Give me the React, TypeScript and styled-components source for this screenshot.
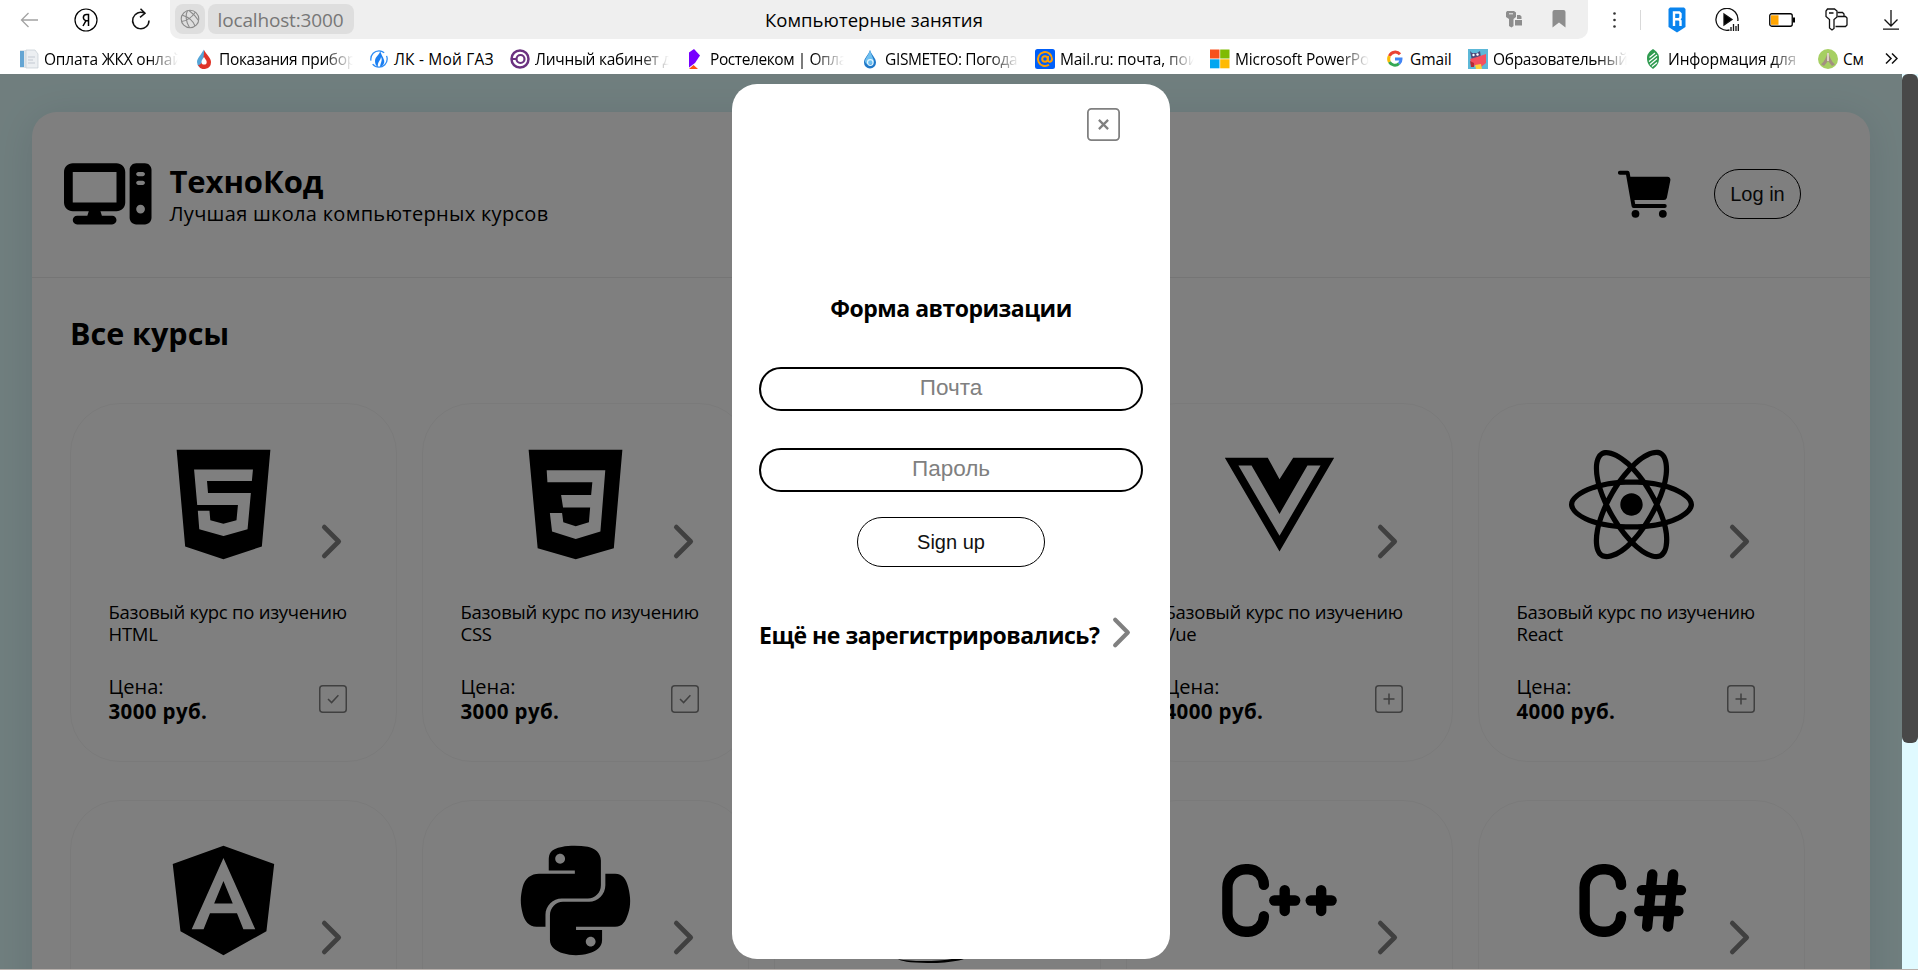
import React from "react";
import styled, { createGlobalStyle, css } from "styled-components";
import { FaHtml5, FaVuejs, FaReact, FaAngular, FaPython, FaJava, FaJs } from "react-icons/fa";
import { FaComputer } from "react-icons/fa6";
import { IoCart, IoChevronForward } from "react-icons/io5";
import { TbBrandCpp, TbBrandCSharp } from "react-icons/tb";

const GlobalStyle = createGlobalStyle`
  * { box-sizing: border-box; }
  html, body { margin: 0; padding: 0; overflow: hidden; background: #fff; }
  body { font-family: "Open Sans", "Noto Sans", sans-serif; color: #000; }
  svg { display: block; flex: none; }
`;

const Screen = styled.div`
  width: 1918px;
  height: 970px;
  display: flex;
  flex-direction: column;
  overflow: hidden;
`;

/* ---------- browser bars ---------- */

const Toolbar = styled.div`
  height: 39px;
  flex: none;
  display: flex;
  align-items: center;
  background: #fff;
`;

const NavGroup = styled.div`
  width: 170px;
  padding-left: 20px;
  display: flex;
  align-items: center;
  gap: 33.5px;
`;

const AddressBar = styled.div`
  width: 1418px;
  height: 39px;
  padding: 0 22px 1px 5px;
  display: flex;
  align-items: center;
  background: #efefef;
  border-radius: 0 0 10px 10px;
`;

const SiteBadge = styled.div`
  width: 30px;
  height: 30px;
  display: flex;
  align-items: center;
  justify-content: center;
  background: #dedede;
  border-radius: 8px;
`;

const Host = styled.div`
  width: 146px;
  height: 30px;
  margin-left: 3px;
  padding: 1px 0 0 9.5px;
  line-height: 30px;
  background: #dedede;
  border-radius: 8px;
  color: #777;
  font-size: 19px;
  letter-spacing: -0.15px;
  white-space: nowrap;
`;

const PageTitle = styled.div`
  margin-left: 411px;
  padding-top: 1px;
  width: 730px;
  font-size: 18.5px;
  line-height: 30px;
  letter-spacing: 0.04px;
  white-space: nowrap;
`;

const FieldIcons = styled.div`
  flex: 1;
  display: flex;
  justify-content: flex-end;
  align-items: center;
  gap: 29px;
`;

const ToolIcons = styled.div`
  flex: 1;
  padding-left: 24.5px;
  display: flex;
  align-items: center;
`;

const Tool = styled.span<{ $gap: number }>`
  margin-left: ${(p) => p.$gap}px;
`;

const Separator = styled.i`
  width: 1px;
  height: 20px;
  margin-left: 24px;
  background: #d9d9d9;
`;

const Bookmarks = styled.div`
  height: 35px;
  flex: none;
  padding-left: 19px;
  display: flex;
  align-items: center;
  gap: 16px;
  background: #fff;
`;

const Bookmark = styled.div`
  padding-top: 4px;
  display: flex;
  align-items: center;
  gap: 5px;
`;

const BookmarkText = styled.span<{ $w: number; $fade?: boolean; $ls: number }>`
  width: ${(p) => p.$w}px;
  padding-top: 1px;
  white-space: nowrap;
  font-size: 15.5px;
  line-height: 24px;
  letter-spacing: ${(p) => p.$ls}px;
  ${(p) =>
    p.$fade &&
    css`
      mask-image: linear-gradient(to right, #000 calc(100% - 30px), transparent);
    `}
`;

/* ---------- page ---------- */

const Viewport = styled.div`
  height: 895px;
  flex: none;
  display: flex;
  position: relative;
  overflow: hidden;
`;

const Page = styled.div`
  width: 1902px;
  height: 895px;
  padding: 38px 32px 0;
  background: #e0fdfd;
  overflow: hidden;
`;

const Wrapper = styled.div`
  width: 1838px;
  height: 1300px;
  background: #fff;
  border-radius: 25px;
  box-shadow: 0 5px 40px rgba(0, 20, 60, 0.1);
`;

const Header = styled.header`
  height: 166px;
  padding: 0 69px 0 32px;
  display: flex;
  align-items: center;
  border-bottom: 1px solid #eaeaea;
`;

const BrandLogo = styled.div`
  margin-bottom: 2px;
`;

const Brand = styled.div`
  margin-left: 18px;
  flex: 1;
`;

const BrandName = styled.h2`
  margin: -1px 0 3px;
  font-size: 31px;
  line-height: 36px;
  font-weight: 700;
  letter-spacing: -0.1px;
  white-space: nowrap;
`;

const BrandNote = styled.p`
  margin: 0;
  font-size: 20px;
  line-height: 24px;
  letter-spacing: 0.3px;
  white-space: nowrap;
`;

const PillButton = styled.button<{ $w: number }>`
  display: block;
  width: ${(p) => p.$w}px;
  height: 50px;
  padding: 0;
  border: 1px solid #000;
  border-radius: 25px;
  background: transparent;
  color: #111;
  font-family: "Liberation Sans", Arial, sans-serif;
  font-size: 20px;
`;

const LoginSlot = styled.div`
  margin: 0 0 1px 38px;
`;

const Section = styled.main`
  padding: 37px 38px 0;
`;

const SectionTitle = styled.h1`
  margin: 0 0 52px;
  font-size: 30.5px;
  line-height: 36px;
  font-weight: 700;
  white-space: nowrap;
`;

const Grid = styled.div`
  display: grid;
  grid-template-columns: repeat(5, 326.5px);
  gap: 38px 25.5px;
`;

const Card = styled.article<{ $row: number }>`
  height: 359px;
  padding: ${(p) => (p.$row === 0 ? 38 : 37)}px 49px 0 37.5px;
  border: 1px solid #f5f5f5;
  border-radius: 50px;
`;

const CardTop = styled.div`
  height: 125px;
  margin: 0 -12px 0 32.5px;
  display: flex;
  align-items: flex-end;
`;

const LogoSlot = styled.div`
  width: 165px;
  flex: none;
  display: flex;
  justify-content: center;
`;

const CourseName = styled.p`
  margin: 34px 0 0;
  width: 250px;
  font-size: 18.5px;
  line-height: 22px;
  letter-spacing: -0.26px;
  white-space: nowrap;
`;

const CardBottom = styled.div`
  margin-top: 29px;
  display: flex;
  align-items: center;
  justify-content: space-between;
`;

const Price = styled.div`
  font-size: 20px;
  line-height: 25px;
  white-space: nowrap;
`;

const PriceValue = styled.b`
  display: block;
  font-size: 20.5px;
  letter-spacing: 0.37px;
`;

/* ---------- scrollbar, overlay, modal ---------- */

const Scrollbar = styled.div`
  width: 16px;
  height: 895px;
  background: #e0faff;
`;

const Thumb = styled.div`
  height: 669px;
  border-radius: 6px;
  background: #484848;
`;

const Overlay = styled.div`
  position: absolute;
  inset: 0 16px 0 0;
  padding: 10px 0 0;
  display: flex;
  justify-content: center;
  align-items: flex-start;
  background: rgba(0, 0, 0, 0.5);
`;

const Modal = styled.form`
  width: 438px;
  height: 875px;
  padding: 24px 27px 0;
  display: flex;
  flex-direction: column;
  align-items: center;
  background: #fff;
  border-radius: 25px;
`;

const CloseRow = styled.div`
  width: 100%;
  padding-right: 23px;
  display: flex;
  justify-content: flex-end;
`;

const ModalTitle = styled.h3`
  margin: 152px 0 44px;
  font-size: 23px;
  line-height: 30px;
  font-weight: 700;
  letter-spacing: -0.5px;
  white-space: nowrap;
`;

const Field = styled.input`
  width: 384px;
  height: 44px;
  flex: none;
  margin-bottom: 37px;
  padding: 0 20px 2px;
  border: 2px solid #000;
  border-radius: 22px;
  outline: none;
  text-align: center;
  font-family: "Liberation Sans", Arial, sans-serif;
  font-size: 22.5px;
  &::placeholder {
    color: #808080;
    opacity: 1;
  }
`;

const SubmitSlot = styled.div`
  margin-top: -12px;
`;

const RegisterRow = styled.div`
  width: 100%;
  height: 45px;
  margin-top: 43px;
  display: flex;
  align-items: center;
`;

const RegisterText = styled.b`
  width: 340px;
  padding-top: 5px;
  flex: none;
  font-size: 23px;
  line-height: 30px;
  letter-spacing: -0.5px;
  white-space: nowrap;
`;

const BottomEdge = styled.div`
  height: 1px;
  background: #b9b1ad;
`;

/* ---------- small drawings ---------- */

const BoxIcon = ({ kind, size }: { kind: "check" | "plus" | "close"; size: number }) => (
  <svg width={size} height={size} viewBox="0 0 28 28" fill="none" stroke="#808080" strokeWidth="1.5">
    <rect x=".75" y=".75" width="26.5" height="26.5" rx="3" />
    {kind === "check" && <path d="M9 14l3.600 3.600L19.400 10.300" />}
    {kind === "plus" && <path d="M14 8.500v11M8.500 14h11" />}
    {kind === "close" && <path d="M10.100 10.100l7.800 7.800M17.900 10.100l-7.800 7.800" strokeWidth="1.9" />}
  </svg>
);

const CssShield = ({ size }: { size: number }) => (
  <svg width={size} height={size} viewBox="-64 0 512 512" fill="#000" fillRule="evenodd">
    <path d="M0 32h384l-35 403-156 45-156-45zM74 116h240l-20 251-101 30-97-30-9-76h50l5 38 51 16 54-16 5-61H141l-8-51h123l5-52H77z" />
  </svg>
);

const fav: Record<string, React.ReactNode> = {
  docs: (
    <>
      <path d="M1 1h10v18H1z" fill="#dfe5ea" />
      <path d="M1 2h4v16H1z" fill="#64a5d3" />
      <path d="M7 1h9l3 4v14H7z" fill="#eceff2" stroke="#c3cbd3" strokeWidth=".7" />
      <path d="M9 8h7M9 11h5M9 14h7" stroke="#c3c9d2" />
    </>
  ),
  drop: (
    <>
      <path d="M9.500 .5C8 5 3 9 3 13a7 7 0 0 0 6 6.500l3-8z" fill="#55a5d8" />
      <path d="M10 1c2 4 7 8 7 12a6.800 6.800 0 0 1-13 3C9 16 10 8 10 1z" fill="#df3328" />
      <path d="M10 8c-1.500 2-2.500 3.500-2.500 5a2.600 2.600 0 0 0 5.200 0c0-1.500-1.500-3-2.700-5z" fill="#fff" />
    </>
  ),
  gas: (
    <>
      <circle cx="10" cy="10" r="8.200" fill="none" stroke="#2f8df5" strokeWidth="1.300" strokeDasharray="20 4" />
      <path d="M11 1c1 4-5 6-5 11 0 3 1 5 3 6-1-5 3-7 3-10 2 3-1 7-1 10 3-1 5-4 4-7-1-4-3-5-4-10z" fill="#1b7ff2" />
    </>
  ),
  ring: (
    <>
      <circle cx="10" cy="10" r="8.500" fill="none" stroke="#6b3180" strokeWidth="2.500" />
      <circle cx="10.500" cy="10" r="4" fill="none" stroke="#6b3180" strokeWidth="2.200" />
      <path d="M1 10h6" stroke="#6b3180" strokeWidth="2" />
    </>
  ),
  rt: (
    <>
      <path d="M4 3.500L9 0l6 6.500L10 14l-6 4.500z" fill="#7700ff" />
      <path d="M4 20l4.500-4L13 20z" fill="#ff4f12" />
    </>
  ),
  meteo: (
    <>
      <path d="M10 1C8.500 6 4 9 4 13.500a6 6 0 0 0 12 0C16 9 11.500 6 10 1z" fill="#1f78c8" />
      <path d="M10 1C9 6 5 9 5 12.500c1 4 7 4 9 0-.5-3-3-7-4-11.500z" fill="#6fc0f0" />
      <circle cx="10.300" cy="13.500" r="2.800" fill="none" stroke="#e3f6ff" strokeWidth="1.200" />
    </>
  ),
  mail: (
    <>
      <rect width="20" height="20" rx="2.500" fill="#005ff9" />
      <circle cx="10" cy="10" r="2.800" fill="none" stroke="#ff9e00" strokeWidth="2" />
      <path d="M13 7v4c0 3 4 2 4-1a7 7 0 1 0-3 5.800" fill="none" stroke="#ff9e00" strokeWidth="2" />
    </>
  ),
  ms: (
    <>
      <path d="M0 .5h9.500v9H0z" fill="#f8511d" />
      <path d="M10.200 .5h9.300v9h-9.300z" fill="#80bb03" />
      <path d="M0 10.300h9.500v9H0z" fill="#02a6f0" />
      <path d="M10.200 10.300h9.300v9h-9.300z" fill="#ffba02" />
    </>
  ),
  google: (
    <g fill="none" strokeWidth="3">
      <path d="M15 5.300A6.300 6.300 0 0 0 4.400 7" stroke="#ea4335" />
      <path d="M4.400 7a6.500 6.500 0 0 0 0 6" stroke="#fbbc05" />
      <path d="M4.400 13A6.300 6.300 0 0 0 14 14.700" stroke="#34a853" />
      <path d="M14 14.700A6 6 0 0 0 16 10h-6" stroke="#4285f4" />
    </g>
  ),
  cat: (
    <>
      <path d="M0 0h20v20H0z" fill="#5cb8d8" />
      <path d="M2 2l2 2h5l3-2 1 7-9 3z" fill="#4e4a7a" />
      <path d="M2 10l7-2 9-3v9l-5 4-9-2z" fill="#f4505f" />
      <path d="M2 12l4 2v4H3z" fill="#b52a35" />
      <path d="M7 16l6-1 1 5H8z" fill="#ffd23a" />
      <circle cx="5.500" cy="6" r="1.200" fill="#fff" />
      <circle cx="9.500" cy="5.500" r="1.200" fill="#fff" />
    </>
  ),
  leaf: (
    <>
      <path d="M10 0c4 3 6 5 6 9 0 5-2 8-6 11-4-3-6-6-6-11 0-4 2-6 6-9z" fill="#2f9b50" />
      <path d="M6.500 8.500L12 4M6 12.500l8-6.500M7 15.500l7-6M9 17.500l5-4" stroke="#fff" strokeWidth="1.200" />
    </>
  ),
  green: (
    <>
      <circle cx="10" cy="10" r="10" fill="#a6cf62" />
      <path d="M10 3C8.500 7 7 12 3 15.500l3 1.500 4-5 4 5 3-1.500C13 12 11.500 7 10 3z" fill="#a39080" />
      <path d="M10 4v8" stroke="#efe7dc" strokeWidth="1.500" />
    </>
  ),
};

const Fav = ({ name }: { name: string }) => (
  <svg width="20" height="20" viewBox="0 0 20 20">
    {fav[name]}
  </svg>
);

const bookmarks = [
  { icon: "docs", text: "Оплата ЖКХ онлай", w: 134, ls: -0.2, fade: true },
  { icon: "drop", text: "Показания прибор", w: 134, ls: -0.36, fade: true },
  { icon: "gas", text: "ЛК - Мой ГАЗ", w: 100, ls: 0.18 },
  { icon: "ring", text: "Личный кабинет д", w: 134, ls: -0.26, fade: true },
  { icon: "rt", text: "Ростелеком | Опла", w: 134, ls: -0.42, fade: true },
  { icon: "meteo", text: "GISMETEO: Погода", w: 134, ls: -0.36, fade: true },
  { icon: "mail", text: "Mail.ru: почта, пои", w: 134, ls: -0.1, fade: true },
  { icon: "ms", text: "Microsoft PowerPo", w: 134, ls: -0.15, fade: true },
  { icon: "google", text: "Gmail", w: 42, ls: -0.1 },
  { icon: "cat", text: "Образовательный", w: 134, ls: -0.3, fade: true },
  { icon: "leaf", text: "Информация для", w: 134, ls: -0.12, fade: true },
  { icon: "green", text: "См", w: 26, ls: -0.3 },
];

type Course = { logo: React.ReactNode; name?: string; price?: number; added?: boolean };

const L = 125;
const courses: Course[] = [
  { logo: <FaHtml5 size={L} />, name: "HTML", price: 3000, added: true },
  { logo: <CssShield size={L} />, name: "CSS", price: 3000, added: true },
  { logo: <FaJs size={L} /> },
  { logo: <FaVuejs size={L} />, name: "Vue", price: 4000 },
  { logo: <FaReact size={L} />, name: "React", price: 4000 },
  { logo: <FaAngular size={L} /> },
  { logo: <FaPython size={L} /> },
  { logo: <FaJava size={L} /> },
  { logo: <TbBrandCpp size={L} /> },
  { logo: <TbBrandCSharp size={L} /> },
];

const CourseCard = ({ course, row }: { course: Course; row: number }) => (
  <Card $row={row}>
    <CardTop>
      <LogoSlot>{course.logo}</LogoSlot>
      <IoChevronForward size={51} color="#808080" />
    </CardTop>
    {course.name && (
      <>
        <CourseName>
          Базовый курс по изучению
          <br />
          {course.name}
        </CourseName>
        <CardBottom>
          <Price>
            Цена:
            <PriceValue>{course.price} руб.</PriceValue>
          </Price>
          <BoxIcon kind={course.added ? "check" : "plus"} size={28} />
        </CardBottom>
      </>
    )}
  </Card>
);

const BrowserBars = () => (
  <>
    <Toolbar>
      <NavGroup>
        <svg width="20" height="20" viewBox="0 0 20 20" fill="none" stroke="#a3a3a3" strokeWidth="1.300">
          <path d="M18 10H1.500M8.500 3L1.500 10l7 7" />
        </svg>
        <svg width="24" height="24" viewBox="0 0 24 24" fill="none" stroke="#000" strokeWidth="1.200">
          <circle cx="12" cy="12" r="11" />
          <path d="M14.500 18V6.500h-2a3 3 0 0 0 0 6.200h2M12 12.700L9 18" strokeWidth="1.500" />
        </svg>
        <svg width="20" height="24" viewBox="0 0 20 24" fill="none" stroke="#111" strokeWidth="1.500">
          <path d="M13.500 5.200A8.200 8.200 0 1 0 18 12.500M9.500 .8l4.500 4.500-5 4" />
        </svg>
      </NavGroup>
      <AddressBar>
        <SiteBadge>
          <svg width="20" height="20" viewBox="0 0 20 20" fill="none" stroke="#8a8a8a" strokeWidth="1.100">
            <circle cx="10" cy="10" r="8.800" />
            <path d="M7.500 1.500c-3 6-1 12 2 17M2 6c6 2 11 5 13 11M15.500 3C12 8 7 12 1.500 12.500M9 1.500c4 3 7 6 9.500 10" />
          </svg>
        </SiteBadge>
        <Host>localhost:3000</Host>
        <PageTitle>Компьютерные занятия</PageTitle>
        <FieldIcons>
          <svg width="18" height="18" viewBox="0 0 18 18" fill="#8d8d8d">
            <path d="M2 1h7l2 1.500V7L8.500 9v7L6.500 17.500 4 16V9L1 7V2.500z" />
            <path d="M12 5h3l1.500 1.500V9H12zM10 10h7v5.500h-7z" />
            <path d="M4 3.800h4" stroke="#efefef" />
          </svg>
          <svg width="14" height="18" viewBox="0 0 14 18" fill="#8d8d8d">
            <path d="M.5 2a2 2 0 0 1 2-2h9a2 2 0 0 1 2 2v15.500L7 12.500.5 17.500z" />
          </svg>
        </FieldIcons>
      </AddressBar>
      <ToolIcons>
        <svg width="3" height="16" viewBox="0 0 3 16" fill="#333">
          <circle cx="1.500" cy="1.500" r="1.300" />
          <circle cx="1.500" cy="8" r="1.300" />
          <circle cx="1.500" cy="14.500" r="1.300" />
        </svg>
        <Separator />
        <Tool $gap={27}>
          <svg width="18" height="26" viewBox="0 0 18 26">
            <path d="M2 .5h14l1.500 1.500v18L9 25.500.5 20V2z" fill="#0a84ee" />
            <path d="M6 19V5.500h5.200l1.300 1.300v3.700L11 12.200l1.500 1.800v5M6 12.200h5" fill="none" stroke="#fff" strokeWidth="2.400" />
          </svg>
        </Tool>
        <Tool $gap={29}>
          <svg width="24" height="24" viewBox="0 0 24 24" fill="none" stroke="#111" strokeWidth="1.300">
            <path d="M14.500 22A11 11 0 1 1 22.800 13" />
            <path d="M9 6l8 5.500-8 5.500z" fill="#000" />
            <path d="M16 23v-4M18.500 23v-7M21 23v-5M23.300 23v-7" />
          </svg>
        </Tool>
        <Tool $gap={30}>
          <svg width="26" height="14" viewBox="0 0 26 14">
            <rect x=".75" y=".75" width="22.500" height="12.500" rx="2" fill="#fff" stroke="#000" strokeWidth="1.300" />
            <rect x="2" y="2.300" width="7.500" height="9.500" fill="#ffa400" />
            <path d="M24 4.500h2v5h-2z" />
          </svg>
        </Tool>
        <Tool $gap={30}>
          <svg width="23" height="23" viewBox="0 0 23 23" fill="none" stroke="#111" strokeWidth="1.300">
            <path d="M2.500 1h7L12 3v6l-3 2.500v9L7 22l-2.500-2v-8.500L1 8.500V3z" />
            <path d="M4 5h4.500M12.500 4.500h5L19 6v2.500h1.500L22 10v7l-1.500 1.500H10.500M12.500 8.500H19" />
          </svg>
        </Tool>
        <Tool $gap={35}>
          <svg width="16" height="20" viewBox="0 0 16 20" fill="none" stroke="#111" strokeWidth="1.300">
            <path d="M8 0v15.500M1.500 9.500L8 16l6.500-6.500M0 19.200h16" />
          </svg>
        </Tool>
      </ToolIcons>
    </Toolbar>
    <Bookmarks>
      {bookmarks.map((b) => (
        <Bookmark key={b.text}>
          <Fav name={b.icon} />
          <BookmarkText $w={b.w} $fade={b.fade} $ls={b.ls}>
            {b.text}
          </BookmarkText>
        </Bookmark>
      ))}
      <Bookmark>
        <svg width="13" height="11" viewBox="0 0 13 11" fill="none" stroke="#111" strokeWidth="1.500">
          <path d="M1 .5l5 5-5 5M7 .5l5 5-5 5" />
        </svg>
      </Bookmark>
    </Bookmarks>
  </>
);

export default function App() {
  return (
    <Screen>
      <GlobalStyle />
      <BrowserBars />
      <Viewport>
        <Page>
          <Wrapper>
            <Header>
              <BrandLogo>
                <FaComputer size={87.5} />
              </BrandLogo>
              <Brand>
                <BrandName>ТехноКод</BrandName>
                <BrandNote>Лучшая школа компьютерных курсов</BrandNote>
              </Brand>
              <IoCart size={62.5} />
              <LoginSlot>
                <PillButton $w={87}>Log in</PillButton>
              </LoginSlot>
            </Header>
            <Section>
              <SectionTitle>Все курсы</SectionTitle>
              <Grid>
                {courses.map((c, i) => (
                  <CourseCard key={i} course={c} row={Math.floor(i / 5)} />
                ))}
              </Grid>
            </Section>
          </Wrapper>
        </Page>
        <Scrollbar>
          <Thumb />
        </Scrollbar>
        <Overlay>
          <Modal>
            <CloseRow>
              <BoxIcon kind="close" size={33} />
            </CloseRow>
            <ModalTitle>Форма авторизации</ModalTitle>
            <Field placeholder="Почта" />
            <Field placeholder="Пароль" />
            <SubmitSlot>
              <PillButton type="button" $w={188}>
                Sign up
              </PillButton>
            </SubmitSlot>
            <RegisterRow>
              <RegisterText>Ещё не зарегистрировались?</RegisterText>
              <IoChevronForward size={45} color="#808080" />
            </RegisterRow>
          </Modal>
        </Overlay>
      </Viewport>
      <BottomEdge />
    </Screen>
  );
}
